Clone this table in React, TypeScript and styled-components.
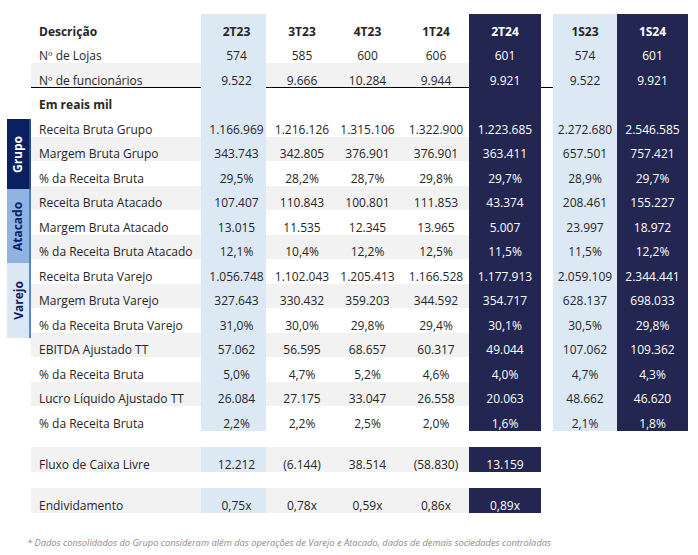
import React from "react";
import styled, { createGlobalStyle } from "styled-components";

type Kind = "plain" | "light" | "dark";

type Line = {
  label: string;
  values: string[];
  semesters?: string[];
  shade?: boolean;
  bold?: boolean;
  rule?: boolean;
};

// column look for the five quarters, then the two semesters
const QUARTERS: { kind: Kind; nudge: number }[] = [
  { kind: "light", nudge: 6 },
  { kind: "plain", nudge: 0 },
  { kind: "plain", nudge: 0 },
  { kind: "plain", nudge: 6 },
  { kind: "dark", nudge: 0 },
];
const SEMESTERS: Kind[] = ["light", "dark"];

const HEAD: Line = {
  label: "Descrição",
  values: ["2T23", "3T23", "4T23", "1T24", "2T24"],
  semesters: ["1S23", "1S24"],
  bold: true,
};

const TOP: Line[] = [
  {
    label: "Nº de Lojas",
    values: ["574", "585", "600", "606", "601"],
    semesters: ["574", "601"],
  },
  {
    label: "Nº de funcionários",
    values: ["9.522", "9.666", "10.284", "9.944", "9.921"],
    semesters: ["9.522", "9.921"],
    shade: true,
    rule: true,
  },
  { label: "Em reais mil", values: ["", "", "", "", ""], semesters: ["", ""], bold: true },
];

const BODY: Line[] = [
  {
    label: "Receita Bruta Grupo",
    values: ["1.166.969", "1.216.126", "1.315.106", "1.322.900", "1.223.685"],
    semesters: ["2.272.680", "2.546.585"],
  },
  {
    label: "Margem Bruta Grupo",
    values: ["343.743", "342.805", "376.901", "376.901", "363.411"],
    semesters: ["657.501", "757.421"],
    shade: true,
  },
  {
    label: "% da Receita Bruta",
    values: ["29,5%", "28,2%", "28,7%", "29,8%", "29,7%"],
    semesters: ["28,9%", "29,7%"],
  },
  {
    label: "Receita Bruta Atacado",
    values: ["107.407", "110.843", "100.801", "111.853", "43.374"],
    semesters: ["208.461", "155.227"],
    shade: true,
  },
  {
    label: "Margem Bruta Atacado",
    values: ["13.015", "11.535", "12.345", "13.965", "5.007"],
    semesters: ["23.997", "18.972"],
  },
  {
    label: "% da Receita Bruta Atacado",
    values: ["12,1%", "10,4%", "12,2%", "12,5%", "11,5%"],
    semesters: ["11,5%", "12,2%"],
    shade: true,
  },
  {
    label: "Receita Bruta Varejo",
    values: ["1.056.748", "1.102.043", "1.205.413", "1.166.528", "1.177.913"],
    semesters: ["2.059.109", "2.344.441"],
  },
  {
    label: "Margem Bruta Varejo",
    values: ["327.643", "330.432", "359.203", "344.592", "354.717"],
    semesters: ["628.137", "698.033"],
    shade: true,
  },
  {
    label: "% da Receita Bruta Varejo",
    values: ["31,0%", "30,0%", "29,8%", "29,4%", "30,1%"],
    semesters: ["30,5%", "29,8%"],
  },
  {
    label: "EBITDA Ajustado TT",
    values: ["57.062", "56.595", "68.657", "60.317", "49.044"],
    semesters: ["107.062", "109.362"],
    shade: true,
  },
  {
    label: "% da Receita Bruta",
    values: ["5,0%", "4,7%", "5,2%", "4,6%", "4,0%"],
    semesters: ["4,7%", "4,3%"],
  },
  {
    label: "Lucro Líquido Ajustado TT",
    values: ["26.084", "27.175", "33.047", "26.558", "20.063"],
    semesters: ["48.662", "46.620"],
    shade: true,
  },
  {
    label: "% da Receita Bruta",
    values: ["2,2%", "2,2%", "2,5%", "2,0%", "1,6%"],
    semesters: ["2,1%", "1,8%"],
  },
];

const EXTRA: Line[] = [
  {
    label: "Fluxo de Caixa Livre",
    values: ["12.212", "(6.144)", "38.514", "(58.830)", "13.159"],
    shade: true,
  },
  {
    label: "Endividamento",
    values: ["0,75x", "0,78x", "0,59x", "0,86x", "0,89x"],
    shade: true,
  },
];

const GROUPS = [
  { name: "Grupo", tone: "strong", size: 70 },
  { name: "Atacado", tone: "mid", size: 74 },
  { name: "Varejo", tone: "soft", size: 75 },
] as const;

const TableRow = ({ line, tall }: { line: Line; tall?: boolean }) => (
  <S.Row $tall={tall}>
    <S.Label $shade={line.shade} $bold={line.bold} $rule={line.rule}>
      {line.label}
    </S.Label>
    {line.values.map((v, i) => (
      <S.Value
        key={i}
        $kind={QUARTERS[i].kind}
        $nudge={QUARTERS[i].nudge}
        $shade={line.shade}
        $bold={line.bold}
        $rule={line.rule}
      >
        {v}
      </S.Value>
    ))}
    <S.Gap $rule={line.rule} />
    {line.semesters?.map((v, i) => (
      <S.Value key={i} $kind={SEMESTERS[i]} $nudge={0} $bold={line.bold} $shade={line.shade}>
        {v}
      </S.Value>
    ))}
  </S.Row>
);

const App = () => (
  <S.Page>
    <GlobalStyle />
    <S.Block>
      <S.Rail>
        {GROUPS.map((g) => (
          <S.Group key={g.name} $tone={g.tone} $size={g.size}>
            <span>{g.name}</span>
          </S.Group>
        ))}
      </S.Rail>
      <S.Rows>
        <TableRow line={HEAD} />
        {TOP.map((l) => (
          <TableRow key={l.label} line={l} />
        ))}
        {BODY.map((l, i) => (
          <TableRow key={i} line={l} />
        ))}
      </S.Rows>
    </S.Block>
    {EXTRA.map((l) => (
      <S.Section key={l.label}>
        <TableRow line={l} tall />
      </S.Section>
    ))}
    <S.Note>
      * Dados consolidados do Grupo consideram além das operações de Varejo e Atacado, dados de
      demais sociedades controladas
    </S.Note>
  </S.Page>
);

const GlobalStyle = createGlobalStyle`
  body {
    margin: 0;
    background: #ffffff;
    font-family: "Open Sans", "Liberation Sans", sans-serif;
    color: #262626;
  }
`;

const COLORS = {
  light: "#dde8f5",
  dark: "#222650",
  shade: "#f2f2f2",
};

const TONES = {
  strong: { bg: "#0b2061", edge: "#2a4a8f", fg: "#ffffff" },
  mid: { bg: "#8fb4e2", edge: "#4f7fc2", fg: "#0b2061" },
  soft: { bg: "#dce7f5", edge: "#5b88cc", fg: "#0b2061" },
};

const S = {
  Page: styled.div`
    display: flex;
    flex-direction: column;
    padding: 14px 0 0 7px;
  `,
  Block: styled.div`
    display: flex;
  `,
  Rail: styled.div`
    width: 24px;
    display: flex;
    flex-direction: column;
    padding-top: 105px;
  `,
  Group: styled.div<{ $tone: keyof typeof TONES; $size: number }>`
    height: ${({ $size }) => $size}px;
    background: ${({ $tone }) => TONES[$tone].bg};
    border-right: 2px solid ${({ $tone }) => TONES[$tone].edge};
    color: ${({ $tone }) => TONES[$tone].fg};
    display: flex;
    align-items: center;
    justify-content: center;
    font-size: 12px;
    font-weight: 700;
    span {
      transform: rotate(-90deg);
      white-space: nowrap;
    }
  `,
  Rows: styled.div`
    display: flex;
    flex-direction: column;
  `,
  Section: styled.div`
    margin: 16px 0 0 24px;
  `,
  Row: styled.div<{ $tall?: boolean }>`
    display: grid;
    grid-template-columns: 170px 65px 72px 59px 72px 72px 12px 64px 71px;
    height: ${({ $tall }) => ($tall ? "25px" : "24.5px")};
    font-size: 12px;
    line-height: 13px;
  `,
  Label: styled.div<{ $shade?: boolean; $bold?: boolean; $rule?: boolean }>`
    display: flex;
    align-items: flex-end;
    padding: 0 0 0 8px;
    box-sizing: border-box;
    background: ${({ $shade }) => ($shade ? COLORS.shade : "transparent")};
    font-weight: ${({ $bold }) => ($bold ? 700 : 400)};
    border-bottom: 1px solid ${({ $rule }) => ($rule ? "#000000" : "transparent")};
    white-space: nowrap;
  `,
  Value: styled.div<{
    $kind: Kind;
    $nudge: number;
    $shade?: boolean;
    $bold?: boolean;
    $rule?: boolean;
  }>`
    display: flex;
    align-items: flex-end;
    justify-content: center;
    padding: 0 0 0 ${({ $nudge }) => $nudge}px;
    box-sizing: border-box;
    white-space: nowrap;
    font-weight: ${({ $bold }) => ($bold ? 700 : 400)};
    background: ${({ $kind, $shade }) =>
      $kind === "light"
        ? COLORS.light
        : $kind === "dark"
          ? COLORS.dark
          : $shade
            ? COLORS.shade
            : "transparent"};
    color: ${({ $kind }) => ($kind === "dark" ? "#ffffff" : "#262626")};
    border-bottom: 1px solid
      ${({ $rule, $kind }) => ($rule && $kind === "plain" ? "#000000" : "transparent")};
  `,
  Gap: styled.div<{ $rule?: boolean }>`
    box-sizing: border-box;
    border-bottom: 1px solid ${({ $rule }) => ($rule ? "#000000" : "transparent")};
  `,
  Note: styled.p`
    margin: 24px 0 0 20px;
    font-size: 9.3px;
    font-style: italic;
    color: #8a8a8a;
    line-height: 12px;
  `,
};

export default App;
